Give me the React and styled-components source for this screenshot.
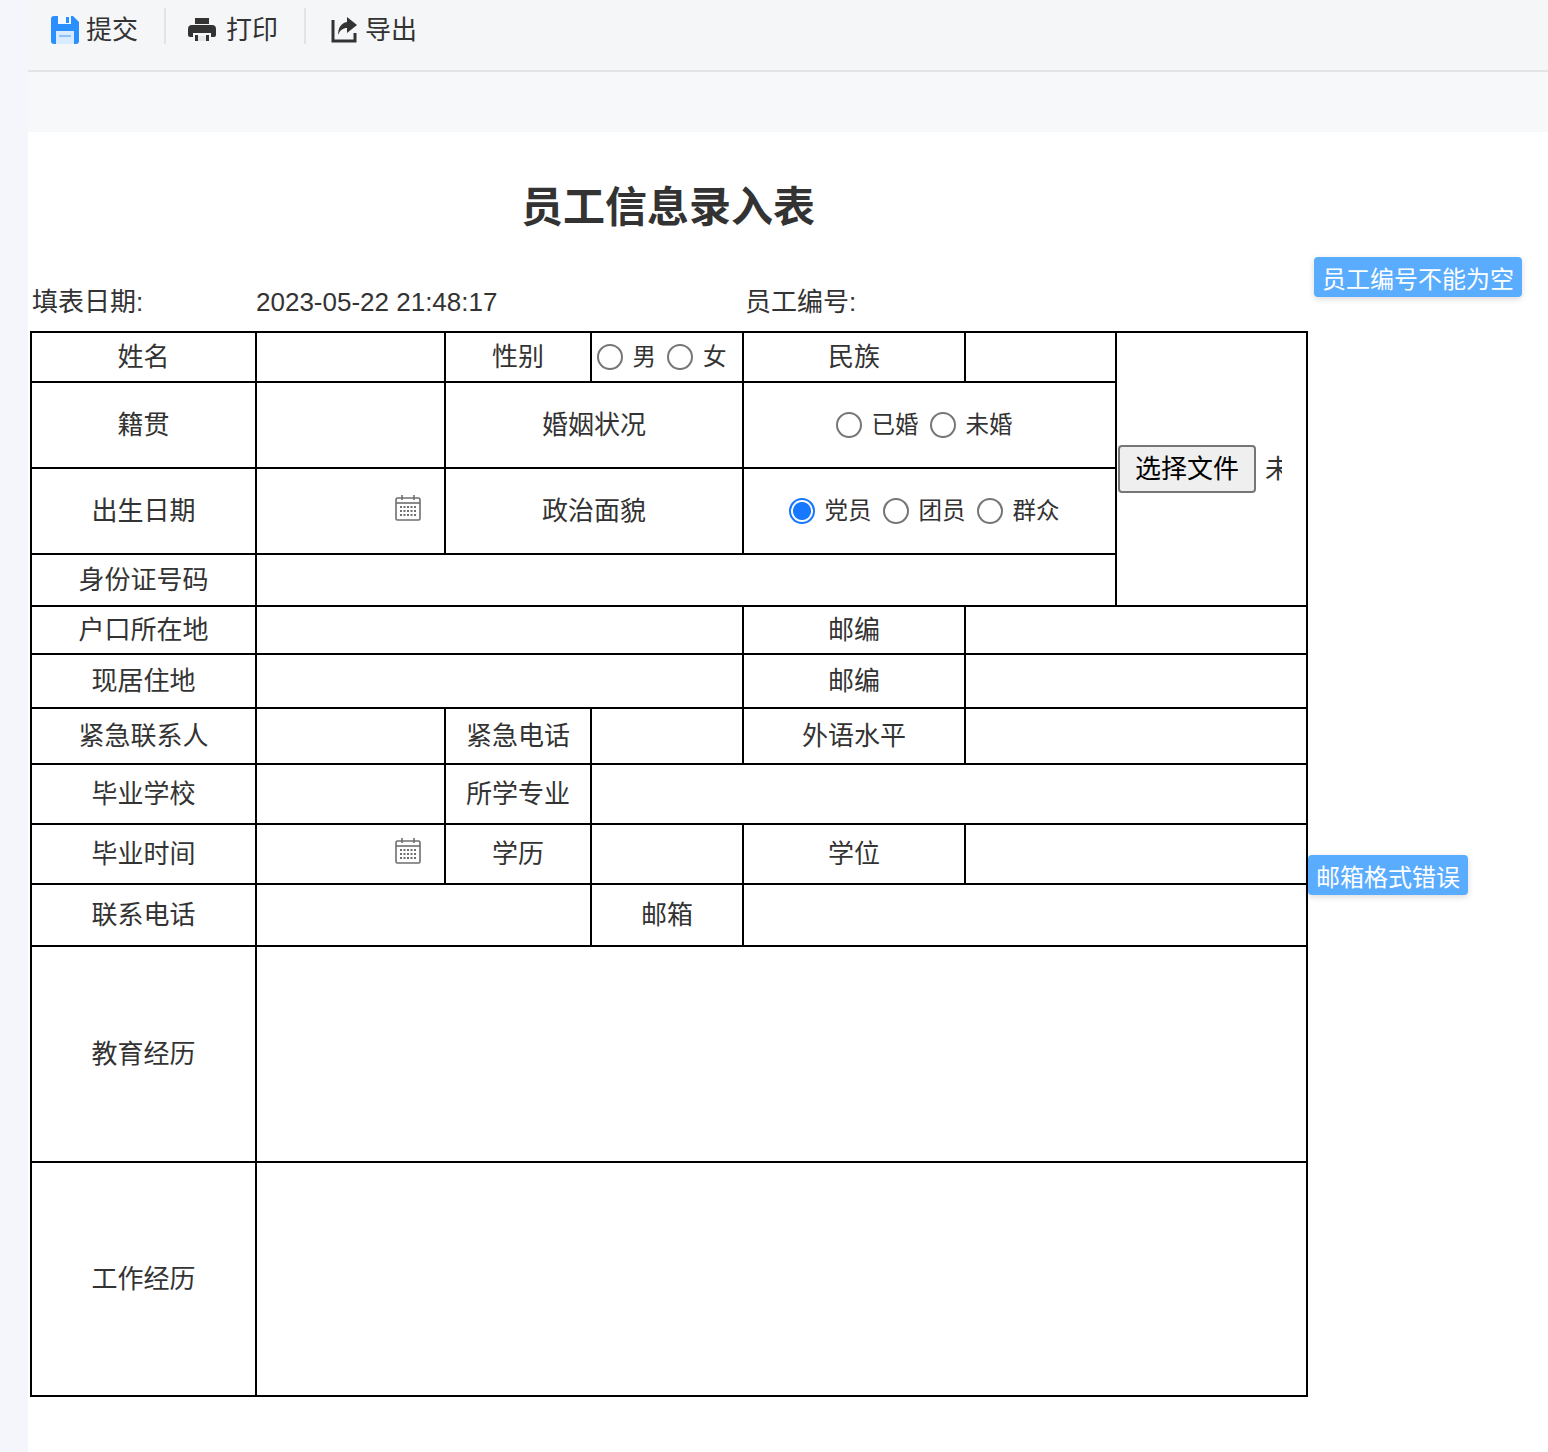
import React from "react";
import styled, { createGlobalStyle } from "styled-components";

const Global = createGlobalStyle`
  html, body { margin: 0; padding: 0; background: #f4f6fb; }
  body { font-family: "Liberation Sans", "Noto Sans CJK SC", sans-serif; color: #333; }
  * { box-sizing: border-box; }
`;

const Page = styled.div`
  width: 1548px;
  height: 1452px;
  display: flex;
  overflow: hidden;
`;
const Gutter = styled.div`
  width: 28px;
  flex: none;
`;
const Main = styled.main`
  flex: 1;
  display: flex;
  flex-direction: column;
`;
const Toolbar = styled.div`
  height: 72px;
  flex: none;
  display: flex;
  align-items: flex-start;
  padding: 8px 0 0 0;
  background: #f5f6f8;
  border-bottom: 2px solid #e3e4e6;
`;
const ToolButton = styled.div`
  height: 36px;
  width: ${p => p.$w}px;
  flex: none;
  display: flex;
  align-items: center;
  padding-left: ${p => p.$pad}px;
  font-size: 26px;
  color: #333;
  border-right: ${p => (p.$sep ? "2px solid #e3e4e6" : "none")};
`;
const ToolLabel = styled.span`
  margin-left: ${p => p.$gap}px;
  line-height: 30px;
  margin-top: 10px;
  margin-top: 8px;
`;
const ToolIcon = styled.svg`
  flex: none;
  margin-top: 8px;
`;
const Band = styled.div`
  height: 60px;
  flex: none;
  background: #f7f8fa;
`;
const Sheet = styled.section`
  position: relative;
  flex: 1;
  background: #fff;
  padding: 0 0 0 2px;
`;
const Title = styled.h1`
  width: 1276px;
  margin: 0;
  padding-top: 50px;
  height: 141px;
  text-align: center;
  font-size: 42px;
  line-height: 52px;
  font-weight: 700;
  color: #333;
`;
const Meta = styled.div`
  width: 1276px;
  height: 58px;
  display: grid;
  grid-template-columns: 224px 489px 1fr;
  align-items: center;
  font-size: 26px;
  line-height: 32px;
  color: #333;
  padding-left: 2px;
`;
const Sheetable = styled.table`
  width: 1276px;
  border-collapse: collapse;
  table-layout: fixed;
`;
const Row = styled.tr`
  height: ${p => p.$h}px;
`;
const Cell = styled.td`
  border: 2px solid #000;
  padding: 0;
  text-align: center;
  vertical-align: middle;
  font-size: 26px;
  line-height: 32px;
  color: #333;
`;
const Options = styled.div`
  display: flex;
  justify-content: center;
  align-items: center;
`;
const Option = styled.label`
  display: inline-flex;
  align-items: center;
  margin-right: 11px;
  font-size: 23.5px;
  line-height: 30px;
  color: #333;
`;
const Radio = styled.input.attrs({ type: "radio" })`
  appearance: none;
  width: 26px;
  height: 26px;
  margin: 0 10px 0 0;
  border-radius: 50%;
  border: 2px solid #767676;
  background: #fff;
  &:checked {
    border-color: #1677ff;
    background: radial-gradient(circle, #1677ff 0 8.5px, #fff 9.5px);
  }
`;
const DateBox = styled.div`
  display: flex;
  justify-content: flex-end;
  padding: 0 23px 7px 0;
`;
const FileBox = styled.div`
  width: 164px;
  margin-left: 1px;
  display: flex;
  align-items: center;
  overflow: hidden;
  white-space: nowrap;
`;
const FileButton = styled.button`
  flex: none;
  width: 138px;
  height: 48px;
  padding: 0;
  border: 2px solid #767676;
  border-radius: 4px;
  background: #efefef;
  color: #000;
  font: 26px/32px "Liberation Sans", "Noto Sans CJK SC", sans-serif;
`;
const FileName = styled.span`
  margin-left: 9px;
  font-size: 26px;
  color: #333;
`;
const Tip = styled.div`
  position: absolute;
  left: ${p => p.$x}px;
  top: ${p => p.$y}px;
  height: 40px;
  padding: 0 8px;
  display: flex;
  align-items: center;
  border-radius: 4px;
  background: #5aacff;
  color: #fff;
  font-size: 24px;
  white-space: nowrap;
  box-shadow: 0 2px 6px rgba(0, 0, 0, 0.15);
`;

const SaveIcon = () => (
  <ToolIcon width="28" height="28" viewBox="0 0 28 28">
    <path fill="#2b8fff" d="M3 0h19l6 6v19a3 3 0 0 1-3 3H3a3 3 0 0 1-3-3V3a3 3 0 0 1 3-3z" />
    <rect x="7" y="0" width="13" height="8" fill="#fff" opacity=".95" />
    <rect x="15" y="1" width="3" height="6" fill="#2b8fff" />
    <rect x="5" y="15" width="18" height="13" fill="#d9ebff" />
    <rect x="8" y="19" width="12" height="2" fill="#8cc3ff" />
  </ToolIcon>
);
const PrintIcon = () => (
  <ToolIcon width="28" height="24" viewBox="0 0 28 24">
    <path fill="#333" d="M7 0h14v6H7z" />
    <path fill="#333" d="M4 7h20a4 4 0 0 1 4 4v6a2 2 0 0 1-2 2h-3v-4H5v4H2a2 2 0 0 1-2-2v-6a4 4 0 0 1 4-4z" />
    <path fill="#333" d="M7 17h3v6H7zM18 17h3v6h-3z" />
    <rect x="10" y="18" width="8" height="5" fill="#e5e6e8" />
  </ToolIcon>
);
const ExportIcon = () => (
  <ToolIcon width="26" height="26" viewBox="0 0 26 26">
    <path fill="none" stroke="#333" strokeWidth="3" d="M2 3v21h22v-8" />
    <path fill="#333" d="M16 0l10 8-10 8v-5c-4 0-7 2-9 7 0-7 3-12 9-13z" />
  </ToolIcon>
);
const CalendarIcon = () => (
  <svg width="26" height="26" viewBox="0 0 26 26" fill="none">
    <rect x="1" y="3" width="24" height="22" rx="1.5" stroke="#6f6f6f" strokeWidth="1.6" />
    <path d="M1 8h24" stroke="#6f6f6f" strokeWidth="1.6" />
    <path d="M7 0v5M19 0v5" stroke="#6f6f6f" strokeWidth="1.6" />
    <path d="M5 12h16M5 16h16M5 20h16" stroke="#6f6f6f" strokeWidth="2" strokeDasharray="2 1.5" />
  </svg>
);

const RadioSet = ({ name, items, checked }) => (
  <Options>
    {items.map(t => (
      <Option key={t}>
        <Radio name={name} defaultChecked={t === checked} />
        {t}
      </Option>
    ))}
  </Options>
);

const DateCell = () => (
  <Cell>
    <DateBox>
      <CalendarIcon />
    </DateBox>
  </Cell>
);

export default function App() {
  return (
    <Page>
      <Global />
      <Gutter />
      <Main>
        <Toolbar>
          <ToolButton $w={138} $pad={23} $sep>
            <SaveIcon />
            <ToolLabel $gap={7}>提交</ToolLabel>
          </ToolButton>
          <ToolButton $w={140} $pad={22} $sep>
            <PrintIcon />
            <ToolLabel $gap={10}>打印</ToolLabel>
          </ToolButton>
          <ToolButton $w={140} $pad={25}>
            <ExportIcon />
            <ToolLabel $gap={8}>导出</ToolLabel>
          </ToolButton>
        </Toolbar>
        <Band />
        <Sheet>
          <Title>员工信息录入表</Title>
          <Meta>
            <span>填表日期:</span>
            <span>2023-05-22 21:48:17</span>
            <span>员工编号:</span>
          </Meta>
          <Sheetable>
            <colgroup>
              <col style={{ width: 225 }} />
              <col style={{ width: 189 }} />
              <col style={{ width: 146 }} />
              <col style={{ width: 152 }} />
              <col style={{ width: 222 }} />
              <col style={{ width: 151 }} />
              <col style={{ width: 191 }} />
            </colgroup>
            <tbody>
              <Row $h={50}>
                <Cell>姓名</Cell>
                <Cell />
                <Cell>性别</Cell>
                <Cell>
                  <RadioSet name="sex" items={["男", "女"]} />
                </Cell>
                <Cell>民族</Cell>
                <Cell />
                <Cell rowSpan={4}>
                  <FileBox>
                    <FileButton type="button">选择文件</FileButton>
                    <FileName>未选择任何文件</FileName>
                  </FileBox>
                </Cell>
              </Row>
              <Row $h={86}>
                <Cell>籍贯</Cell>
                <Cell />
                <Cell colSpan={2}>婚姻状况</Cell>
                <Cell colSpan={2}>
                  <RadioSet name="marry" items={["已婚", "未婚"]} />
                </Cell>
              </Row>
              <Row $h={86}>
                <Cell>出生日期</Cell>
                <DateCell />
                <Cell colSpan={2}>政治面貌</Cell>
                <Cell colSpan={2}>
                  <RadioSet name="party" items={["党员", "团员", "群众"]} checked="党员" />
                </Cell>
              </Row>
              <Row $h={52}>
                <Cell>身份证号码</Cell>
                <Cell colSpan={5} />
              </Row>
              <Row $h={48}>
                <Cell>户口所在地</Cell>
                <Cell colSpan={3} />
                <Cell>邮编</Cell>
                <Cell colSpan={2} />
              </Row>
              <Row $h={54}>
                <Cell>现居住地</Cell>
                <Cell colSpan={3} />
                <Cell>邮编</Cell>
                <Cell colSpan={2} />
              </Row>
              <Row $h={56}>
                <Cell>紧急联系人</Cell>
                <Cell />
                <Cell>紧急电话</Cell>
                <Cell />
                <Cell>外语水平</Cell>
                <Cell colSpan={2} />
              </Row>
              <Row $h={60}>
                <Cell>毕业学校</Cell>
                <Cell />
                <Cell>所学专业</Cell>
                <Cell colSpan={4} />
              </Row>
              <Row $h={60}>
                <Cell>毕业时间</Cell>
                <DateCell />
                <Cell>学历</Cell>
                <Cell />
                <Cell>学位</Cell>
                <Cell colSpan={2} />
              </Row>
              <Row $h={62}>
                <Cell>联系电话</Cell>
                <Cell colSpan={2} />
                <Cell>邮箱</Cell>
                <Cell colSpan={3} />
              </Row>
              <Row $h={216}>
                <Cell>教育经历</Cell>
                <Cell colSpan={6} />
              </Row>
              <Row $h={234}>
                <Cell>工作经历</Cell>
                <Cell colSpan={6} />
              </Row>
            </tbody>
          </Sheetable>
          <Tip $x={1286} $y={125}>员工编号不能为空</Tip>
          <Tip $x={1280} $y={723}>邮箱格式错误</Tip>
        </Sheet>
      </Main>
    </Page>
  );
}
